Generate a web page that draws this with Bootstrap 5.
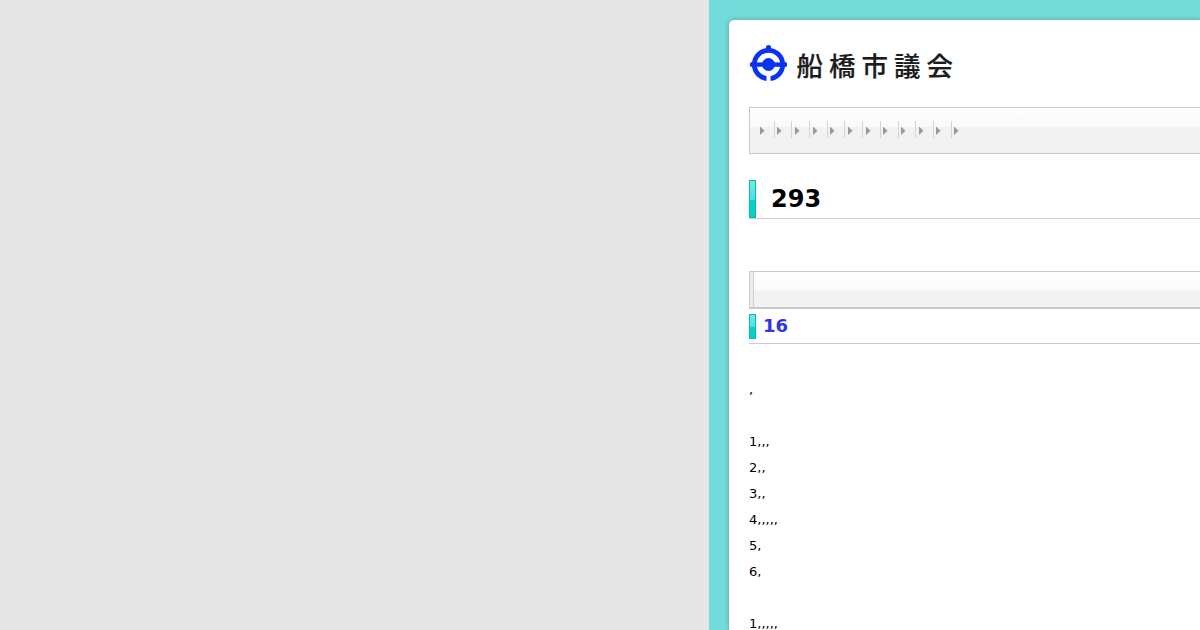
<!DOCTYPE html>
<html lang="ja">
<head>
<meta charset="utf-8">
<meta name="viewport" content="width=device-width, initial-scale=1">
<title>船橋市議会</title>
<link rel="stylesheet" href="https://cdn.jsdelivr.net/npm/bootstrap@5.3.0/dist/css/bootstrap.min.css">
<style>
body { background: #e6e6e6; color: #000; font: 13px/26px "DejaVu Sans", sans-serif; }
.side { width: 709px; }
.frame { background: #73dbd9; padding: 20px 0 0 20px; }
.sheet { border-radius: 5px 0 0 0; padding-left: 20px; box-shadow: 0 0 5px rgba(0,0,0,.25); }
.brand { height: 87px; padding-top: 24px; }
.brand-name { font: 500 26.5px/40px "Noto Sans CJK JP", sans-serif; letter-spacing: 6px; color: #1c1c1c; margin: 1px 0 0 9.5px; -webkit-text-stroke: .2px #1c1c1c; }
.menu { height: 47px; border: 1px solid #c8c8c8; border-right: 0; background: linear-gradient(#fff, #f9f9f9 19px, #f2f2f2 19px); padding: 13px 0 0; }
.menu li { width: 17.7px; height: 17px; border-left: 1px solid #d4d4d4; padding: 5px 0 0 1.5px; }
.menu li:first-child { border-color: transparent; padding-left: 2px; }
.menu ul { margin-left: 6px; }
.menu svg { display: block; }
.title { height: 39px; margin-top: 26px; border-bottom: 1px solid #ccc; }
.title h1 { font-size: 24px; line-height: 39px; margin-left: 15px; }
.marker { width: 7px; border: 1px solid #0bb9b3; background: linear-gradient(#72eae5, #4ee0da 52%, #08cec8 52%); }
.panel { height: 38px; margin-top: 52px; border: 1px solid #ccc; border-bottom: 2px solid #c8c8c8; border-right: 0; background: linear-gradient(#fff, #f9f9f9 19px, #f2f2f2 19px); }
.panel-edge { width: 4px; border-right: 1px solid #ccc; background: #ededed; }
.subtitle { height: 31px; margin-top: 4px; padding-top: 1px; border-bottom: 1px solid #ccc; }
.subtitle .marker { height: 25px; }
.subtitle h2 { font-size: 18px; line-height: 24px; margin-left: 7px; color: #3333e5; }
.minutes { margin-top: 33px; }
.minutes p { height: 26px; }
</style>
</head>
<body>
<div class="d-flex vh-100 overflow-hidden">
  <div class="side flex-shrink-0"></div>
  <div class="frame flex-grow-1">
    <main class="sheet bg-white h-100">
      <header class="brand d-flex align-items-start">
        <svg width="38" height="40" viewBox="0 0 38 40" role="img" aria-label="市章">
          <circle cx="19.5" cy="20.5" r="14.2" fill="none" stroke="#0833f2" stroke-width="4.8"/>
          <g fill="#0833f2">
            <circle cx="19.5" cy="20.5" r="6.5"/>
            <rect x="3" y="18.4" width="33" height="4.4"/>
            <circle cx="3.3" cy="20.5" r="2.5"/><circle cx="35.7" cy="20.5" r="2.5"/>
            <circle cx="19.5" cy="3.5" r="2.6"/>
          </g>
          <rect x="17.5" y="31.5" width="4" height="7" fill="#fff"/>
        </svg>
        <span class="brand-name text-nowrap">船橋市議会</span>
      </header>
      <nav class="menu">
        <ul class="list-unstyled d-flex mb-0">
          <li><svg width="6" height="9"><path d="M1 .5 5.5 4.7 1 8.9Z" fill="#999"/></svg></li>
          <li><svg width="6" height="9"><path d="M1 .5 5.5 4.7 1 8.9Z" fill="#999"/></svg></li>
          <li><svg width="6" height="9"><path d="M1 .5 5.5 4.7 1 8.9Z" fill="#999"/></svg></li>
          <li><svg width="6" height="9"><path d="M1 .5 5.5 4.7 1 8.9Z" fill="#999"/></svg></li>
          <li><svg width="6" height="9"><path d="M1 .5 5.5 4.7 1 8.9Z" fill="#999"/></svg></li>
          <li><svg width="6" height="9"><path d="M1 .5 5.5 4.7 1 8.9Z" fill="#999"/></svg></li>
          <li><svg width="6" height="9"><path d="M1 .5 5.5 4.7 1 8.9Z" fill="#999"/></svg></li>
          <li><svg width="6" height="9"><path d="M1 .5 5.5 4.7 1 8.9Z" fill="#999"/></svg></li>
          <li><svg width="6" height="9"><path d="M1 .5 5.5 4.7 1 8.9Z" fill="#999"/></svg></li>
          <li><svg width="6" height="9"><path d="M1 .5 5.5 4.7 1 8.9Z" fill="#999"/></svg></li>
          <li><svg width="6" height="9"><path d="M1 .5 5.5 4.7 1 8.9Z" fill="#999"/></svg></li>
          <li><svg width="6" height="9"><path d="M1 .5 5.5 4.7 1 8.9Z" fill="#999"/></svg></li>
        </ul>
      </nav>
      <div class="title d-flex">
        <span class="marker"></span>
        <h1 class="fw-bold mb-0">293</h1>
      </div>
      <div class="panel d-flex"><span class="panel-edge"></span></div>
      <div class="subtitle d-flex">
        <span class="marker"></span>
        <h2 class="fw-bold mb-0">16</h2>
      </div>
      <div class="minutes">
        <p class="mb-0">,</p>
        <p class="mb-0"></p>
        <p class="mb-0">1,,,</p>
        <p class="mb-0">2,,</p>
        <p class="mb-0">3,,</p>
        <p class="mb-0">4,,,,,</p>
        <p class="mb-0">5,</p>
        <p class="mb-0">6,</p>
        <p class="mb-0"></p>
        <p class="mb-0">1,,,,,</p>
      </div>
    </main>
  </div>
</div>
<script src="https://cdn.jsdelivr.net/npm/bootstrap@5.3.0/dist/js/bootstrap.bundle.min.js"></script>
</body>
</html>
